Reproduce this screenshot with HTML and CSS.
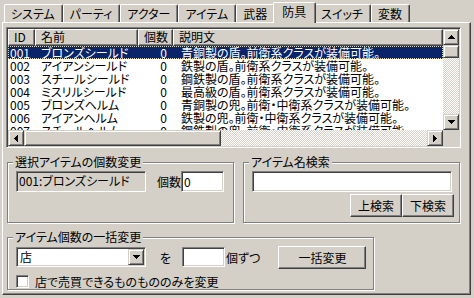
FILE: index.html
```html
<!DOCTYPE html>
<html>
<head>
    <title>防具</title>
    <link rel="stylesheet" href="styles.css">
</head>
<body>
    <div class="dialog">
        <div class="tabs">
            <div class="tab">システム</div>
            <div class="tab">パーティ</div>
            <div class="tab">アクター</div>
            <div class="tab">アイテム</div>
            <div class="tab">武器</div>
            <div class="tab selected">防具</div>
            <div class="tab">スイッチ</div>
            <div class="tab">変数</div>
        </div>

        <div class="panel">
            <div class="list">
                <div class="list-body">
                    <div class="list-head">
                        <div>ID</div>
                        <div>名前</div>
                        <div>個数</div>
                        <div>説明文</div>
                    </div>
                    <div class="row selected">
                        <span class="id">001</span><span class="name">ブロンズシールド</span><span class="num">0</span><span class="desc">青銅製の盾。前衛系クラスが装備可能。</span>
                    </div>
                    <div class="row">
                        <span class="id">002</span><span class="name">アイアンシールド</span><span class="num">0</span><span class="desc">鉄製の盾。前衛系クラスが装備可能。</span>
                    </div>
                    <div class="row">
                        <span class="id">003</span><span class="name">スチールシールド</span><span class="num">0</span><span class="desc">鋼鉄製の盾。前衛系クラスが装備可能。</span>
                    </div>
                    <div class="row">
                        <span class="id">004</span><span class="name">ミスリルシールド</span><span class="num">0</span><span class="desc">最高級の盾。前衛系クラスが装備可能。</span>
                    </div>
                    <div class="row">
                        <span class="id">005</span><span class="name">ブロンズヘルム</span><span class="num">0</span><span class="desc">青銅製の兜。前衛・中衛系クラスが装備可能。</span>
                    </div>
                    <div class="row">
                        <span class="id">006</span><span class="name">アイアンヘルム</span><span class="num">0</span><span class="desc">鉄製の兜。前衛・中衛系クラスが装備可能。</span>
                    </div>
                    <div class="row">
                        <span class="id">007</span><span class="name">スチールヘルム</span><span class="num">0</span><span class="desc">鋼鉄製の兜。前衛・中衛系クラスが装備可能。</span>
                    </div>
                </div>

                <div class="vscroll">
                    <div class="sbtn raised">
                        <svg width="7" height="4" viewBox="0 0 7 4"><path d="M3 0h1v1h1v1h1v1h1v1H0V3h1V2h1V1h1z"/></svg>
                    </div>
                    <div class="thumb raised"></div>
                    <div class="track"></div>
                    <div class="sbtn raised">
                        <svg width="7" height="4" viewBox="0 0 7 4"><path d="M0 0h7v1H6v1H5v1H4v1H3V3H2V2H1V1H0z"/></svg>
                    </div>
                </div>

                <div class="hscroll">
                    <div class="sbtn raised">
                        <svg width="4" height="7" viewBox="0 0 4 7"><path d="M3 0h1v7H3V6H2V5H1V4H0V3h1V2h1V1h1z"/></svg>
                    </div>
                    <div class="thumb raised"></div>
                    <div class="track"></div>
                    <div class="sbtn raised">
                        <svg width="4" height="7" viewBox="0 0 4 7"><path d="M0 0h1v1h1v1h1v1h1v1H3v1H2v1H1v1H0z"/></svg>
                    </div>
                </div>

                <div class="corner"></div>
            </div>

            <div class="groups">
                <fieldset class="group group-count">
                    <legend>選択アイテムの個数変更</legend>
                    <div class="group-body">
                        <div class="static-field">001:ブロンズシールド</div>
                        <label class="count-label" for="count">個数</label>
                        <input class="field count-field" type="text" id="count" value="0">
                    </div>
                </fieldset>

                <fieldset class="group group-search">
                    <legend>アイテム名検索</legend>
                    <div class="group-body">
                        <input class="field search-field" type="text">
                        <div class="search-buttons">
                            <button class="button" type="button">上検索</button>
                            <button class="button" type="button">下検索</button>
                        </div>
                    </div>
                </fieldset>
            </div>

            <fieldset class="group group-bulk">
                <legend>アイテム個数の一括変更</legend>
                <div class="group-body">
                    <div class="bulk-row">
                        <div class="combo">
                            <span class="combo-text">店</span>
                            <span class="combo-btn raised">
                                <svg width="7" height="4" viewBox="0 0 7 4"><path d="M0 0h7v1H6v1H5v1H4v1H3V3H2V2H1V1H0z"/></svg>
                            </span>
                        </div>
                        <span class="wo">を</span>
                        <input class="field count-field" type="text">
                        <span class="per">個ずつ</span>
                        <button class="button bulk-button" type="button">一括変更</button>
                    </div>
                    <div class="check-row">
                        <span class="checkbox"></span>
                        <span>店で売買できるものもののみを変更</span>
                    </div>
                </div>
            </fieldset>
        </div>
    </div>
</body>
</html>
```

FILE: styles.css
```css
body {
    margin: 0;
    background-color: #d4d0c8;
    font-family: "Noto Sans CJK JP", sans-serif;
    font-size: 12px;
    font-feature-settings: "palt";
    color: #000;
}

.dialog {
    padding-top: 2px;
}

/* tabs */

.tabs {
    display: flex;
    align-items: flex-end;
    height: 20px;
    padding-left: 4px;
}

.tab {
    height: 18px;
    box-sizing: border-box;
    padding: 0 7px 0 6px;
    line-height: 17px;
    border-top: 1px solid #fff;
    border-left: 1px solid #fff;
    border-right: 1px solid #404040;
    border-radius: 2px 2px 0 0;
    box-shadow: inset -1px 0 #808080;
    white-space: nowrap;
}

.tab.selected {
    position: relative;
    z-index: 1;
    height: 21px;
    margin: 0 -2px -1px;
    padding: 0 9px 0 8px;
    line-height: 17px;
    background-color: #d4d0c8;
}

.panel {
    width: 469px;
    height: 273px;
    margin-left: 2px;
    box-sizing: border-box;
    border: 1px solid;
    border-color: #fff #404040 #404040 #fff;
    box-shadow: inset -1px -1px #808080;
}

/* list view */

.list {
    display: grid;
    grid-template-columns: 435px 16px;
    grid-template-rows: 101px 16px;
    width: 455px;
    height: 121px;
    margin: 4px 0 0 3px;
    box-sizing: border-box;
    padding: 1px;
    border: 1px solid;
    border-color: #808080 #fff #fff #808080;
    box-shadow: inset 1px 1px #404040, inset -1px -1px #d4d0c8;
}

.list-body {
    overflow: hidden;
    background-color: #fff;
}

.list-head,
.row {
    display: grid;
    grid-template-columns: 27px 103px 35px 1fr;
}

.list-head {
    height: 17px;
}

.list-head div {
    box-sizing: border-box;
    padding-left: 5px;
    line-height: 14px;
    border: 1px solid;
    border-color: #fff #404040 #404040 #fff;
    box-shadow: inset -1px -1px #808080;
    background-color: #d4d0c8;
}

.row {
    height: 13px;
    line-height: 13px;
    white-space: nowrap;
}

.row .id {
    padding-left: 2px;
}

.row .name {
    padding-left: 6px;
}

.row .num {
    padding-right: 6px;
    text-align: right;
}

.row .desc {
    padding-left: 8px;
}

.row.selected {
    background-color: #0a246a;
    color: #fff;
    outline: 1px dotted #e8d890;
    outline-offset: -1px;
}

/* scrollbars */

.raised {
    box-sizing: border-box;
    background-color: #d4d0c8;
    border: 1px solid;
    border-color: #d4d0c8 #404040 #404040 #d4d0c8;
    box-shadow: inset 1px 1px #fff, inset -1px -1px #808080;
}

.vscroll {
    display: flex;
    flex-direction: column;
}

.hscroll {
    display: flex;
}

.sbtn {
    display: flex;
    flex: none;
    align-items: center;
    justify-content: center;
    width: 16px;
    height: 16px;
}

.vscroll .thumb {
    height: 13px;
}

.hscroll .thumb {
    width: 197px;
}

.track {
    flex: 1;
    background: repeating-conic-gradient(#fff 0% 25%, #d4d0c8 0% 50%) 0 0 / 2px 2px;
}

.corner {
    background-color: #d4d0c8;
}

/* group boxes */

.groups {
    display: flex;
    margin: 7px 0 0 4px;
}

.group {
    margin: 0;
    padding: 0;
    min-width: 0;
    box-sizing: border-box;
    border: 1px solid #808080;
    box-shadow: inset 1px 1px #fff, 1px 1px #fff;
}

.group legend {
    margin-left: 5px;
    padding: 0 2px;
    line-height: 14px;
    background-color: #d4d0c8;
}

.group-count {
    width: 227px;
}

.group-search {
    width: 217px;
    margin-left: 9px;
}

.group-body {
    box-sizing: border-box;
    height: 53px;
    padding: 2px 0 0 8px;
}

.group-count .group-body {
    display: flex;
    align-items: flex-start;
}

.field {
    box-sizing: border-box;
    height: 21px;
    margin: 0;
    padding: 0 1px;
    border: 1px solid;
    border-color: #808080 #fff #fff #808080;
    box-shadow: inset 1px 1px #404040, inset -1px -1px #d4d0c8;
    background-color: #fff;
    font: inherit;
    color: #000;
    outline: none;
}

.static-field {
    box-sizing: border-box;
    width: 130px;
    height: 21px;
    padding: 2px 0 0 2px;
    line-height: 14px;
    border: 1px solid;
    border-color: #808080 #fff #fff #808080;
    box-shadow: inset 1px 1px #404040, inset -1px -1px #d4d0c8;
    white-space: nowrap;
}

.count-label {
    margin-left: 11px;
    line-height: 21px;
}

.count-field {
    width: 43px;
    padding-left: 2px;
}

.search-field {
    display: block;
    width: 200px;
}

.search-buttons {
    display: flex;
    justify-content: flex-end;
    margin-top: 2px;
    padding-right: 5px;
}

.button {
    box-sizing: border-box;
    width: 52px;
    height: 23px;
    margin: 0;
    padding: 0;
    border: 1px solid;
    border-color: #fff #404040 #404040 #fff;
    box-shadow: inset -1px -1px #808080;
    background-color: #d4d0c8;
    font: inherit;
    color: #000;
}

.group-bulk {
    width: 367px;
    margin: 7px 0 0 4px;
}

.group-bulk .group-body {
    height: 45px;
    padding-top: 3px;
}

.bulk-row {
    display: flex;
    align-items: center;
    height: 20px;
}

.bulk-row .field {
    height: 20px;
}

.combo {
    display: flex;
    width: 130px;
    height: 20px;
    box-sizing: border-box;
    padding: 1px;
    border: 1px solid;
    border-color: #808080 #fff #fff #808080;
    box-shadow: inset 1px 1px #404040, inset -1px -1px #d4d0c8;
    background-color: #fff;
}

.combo-text {
    flex: 1;
    padding-left: 2px;
    line-height: 16px;
}

.combo-btn {
    display: flex;
    align-items: center;
    justify-content: center;
    width: 16px;
    height: 16px;
}

.wo {
    margin: 0 11px 0 14px;
}

.per {
    margin-left: 1px;
}

.bulk-button {
    width: 88px;
    margin-left: 18px;
}

.check-row {
    display: flex;
    align-items: center;
    margin-top: 6px;
}

.checkbox {
    box-sizing: border-box;
    width: 13px;
    height: 13px;
    margin-right: 6px;
    border: 1px solid;
    border-color: #808080 #fff #fff #808080;
    box-shadow: inset 1px 1px #404040, inset -1px -1px #d4d0c8;
    background-color: #fff;
}
```
